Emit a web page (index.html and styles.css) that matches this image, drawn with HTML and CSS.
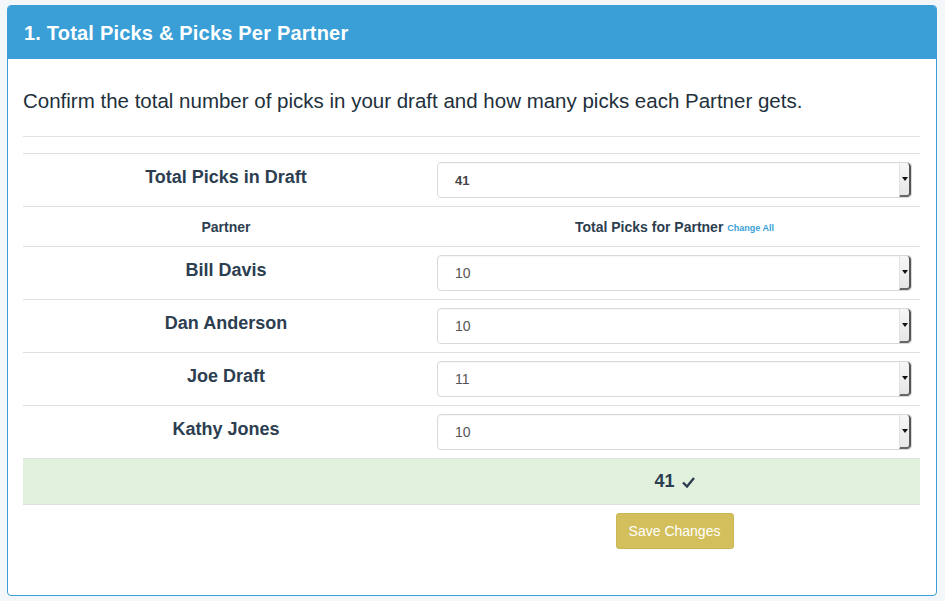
FILE: index.html
```html
<!DOCTYPE html>
<html>
<head>
<meta charset="utf-8">
<link rel="stylesheet" href="styles.css">
</head>
<body>
<div class="panel">
  <div class="panel-heading">1. Total Picks &amp; Picks Per Partner</div>
  <div class="panel-body">
    <p class="intro">Confirm the total number of picks in your draft and how many picks each Partner gets.</p>
    <hr class="sep">
    <div class="grid">
      <div class="row">
        <div class="cell label">Total Picks in Draft</div>
        <div class="cell"><div class="select bold"><span class="val">41</span><span class="arrow"></span></div></div>
      </div>
      <div class="row head">
        <div class="cell th">Partner</div>
        <div class="cell th">Total Picks for Partner <a class="change">Change All</a></div>
      </div>
      <div class="row">
        <div class="cell label">Bill Davis</div>
        <div class="cell"><div class="select"><span class="val">10</span><span class="arrow"></span></div></div>
      </div>
      <div class="row">
        <div class="cell label">Dan Anderson</div>
        <div class="cell"><div class="select"><span class="val">10</span><span class="arrow"></span></div></div>
      </div>
      <div class="row">
        <div class="cell label">Joe Draft</div>
        <div class="cell"><div class="select"><span class="val">11</span><span class="arrow"></span></div></div>
      </div>
      <div class="row">
        <div class="cell label">Kathy Jones</div>
        <div class="cell"><div class="select"><span class="val">10</span><span class="arrow"></span></div></div>
      </div>
      <div class="row total">
        <div class="cell"></div>
        <div class="cell sum">41<svg class="check" width="13" height="11" viewBox="0 0 13 11"><polyline points="1,5.5 5,9.5 12,1" fill="none" stroke="#2c3e50" stroke-width="2.4"/></svg></div>
      </div>
      <div class="row actions">
        <div class="cell"></div>
        <div class="cell center"><button class="btn">Save Changes</button></div>
      </div>
    </div>
  </div>
</div>
</body>
</html>
```

FILE: styles.css
```css
html, body {
  margin: 0;
  background: #f4f7fa;
}
body {
  padding: 5px 8px 6px 7px;
  font-family: "Liberation Sans", Arial, sans-serif;
  color: #2c3e50;
}
.panel {
  background: #fff;
  border: 1px solid #3a9fd7;
  border-radius: 4px;
  height: 591px;
  box-sizing: border-box;
  overflow: hidden;
}
.panel-heading {
  background: #3a9fd7;
  color: #fff;
  font-weight: bold;
  font-size: 20px;
  letter-spacing: 0.2px;
  height: 53px;
  line-height: 54px;
  padding-left: 16px;
}
.panel-body {
  padding: 14px 16px 0 15px;
}
.intro {
  margin: 14px 0 0 0;
  font-size: 20.5px;
  line-height: 28px;
  color: #22303c;
}
.sep {
  border: 0;
  border-top: 1px solid #e1e4e7;
  margin: 21px 0 16px 0;
}
.grid {
  display: flex;
  flex-direction: column;
}
.row {
  display: grid;
  grid-template-columns: 406px 1fr;
  border-top: 1px solid #dde1e4;
}
.cell {
  padding: 8px;
}
.label {
  text-align: center;
  font-weight: bold;
  font-size: 18px;
  line-height: 26px;
  padding-top: 10px;
  color: #2c3e50;
}
.head .cell {
  height: 39px;
  box-sizing: border-box;
  display: flex;
  align-items: center;
  justify-content: center;
  padding: 0 8px;
}
.th {
  font-weight: bold;
  font-size: 14px;
  color: #2c3e50;
}
.change {
  color: #3a9fd7;
  font-size: 9px;
  margin-left: 4px;
  position: relative;
  top: 1px;
}
.select {
  height: 36px;
  box-sizing: border-box;
  border: 1px solid #d6dadd;
  border-radius: 4px;
  display: flex;
  align-items: center;
  justify-content: space-between;
  font-size: 14px;
  color: #555;
  overflow: hidden;
  box-shadow: inset 0 1px 1px rgba(0,0,0,0.04);
}
.select .val {
  padding-left: 17px;
}
.select.bold .val {
  font-weight: bold;
  font-size: 13px;
  color: #444;
}
.arrow {
  width: 12px;
  height: 100%;
  box-sizing: border-box;
  background: linear-gradient(#f7f7f7, #e6e6e6);
  border-left: 1px solid #e2e2e2;
  border-right: 2px solid #555;
  border-bottom: 2px solid #666;
  border-radius: 0 4px 4px 0;
  position: relative;
}
.arrow::after {
  content: "";
  position: absolute;
  left: 2px;
  top: 14px;
  border-left: 3px solid transparent;
  border-right: 3px solid transparent;
  border-top: 4px solid #111;
}
.total {
  background: #e2f1de;
  border-bottom: 1px solid #dde1e4;
}
.total .cell {
  height: 45px;
  box-sizing: border-box;
}
.sum {
  display: flex;
  align-items: center;
  justify-content: center;
  font-weight: bold;
  font-size: 18px;
  color: #2c3e50;
}
.check {
  margin-left: 7px;
  position: relative;
  top: 1px;
}
.actions {
  border-top: 0;
}
.actions .cell {
  padding-top: 8px;
}
.center {
  display: flex;
  justify-content: center;
}
.btn {
  background: #d3c05d;
  border: 1px solid #c9b654;
  border-radius: 3px;
  color: #fff;
  font-family: "Liberation Sans", Arial, sans-serif;
  font-size: 14px;
  height: 36px;
  width: 118px;
  padding: 0;
}
```
